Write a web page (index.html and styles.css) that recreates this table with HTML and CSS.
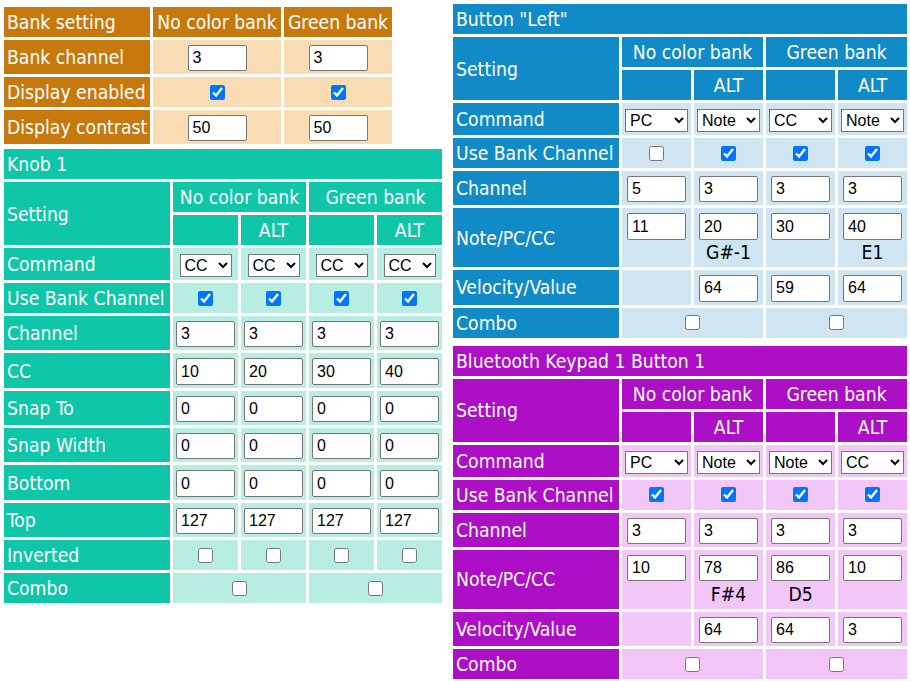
FILE: index.html
```html
<!DOCTYPE html>
<html>
<head>
<meta charset="utf-8">
<link rel="stylesheet" href="styles.css">
</head>
<body>
<div class="page">
  <div class="col col-left">
    <table class="cfg t-bank w-bank">
      <colgroup><col class="c-bank1"><col class="c-bank2"><col class="c-bank3"></colgroup>
      <tr><th class="lbl">Bank setting</th><th class="hd">No color bank</th><th class="hd">Green bank</th></tr>
      <tr><th class="lbl">Bank channel</th><td><input class="num" type="text" value="3"></td><td><input class="num" type="text" value="3"></td></tr>
      <tr><th class="lbl">Display enabled</th><td class="mid"><input type="checkbox" checked></td><td class="mid"><input type="checkbox" checked></td></tr>
      <tr><th class="lbl">Display contrast</th><td><input class="num" type="text" value="50"></td><td><input class="num" type="text" value="50"></td></tr>
    </table>

    <table class="cfg t-knob w-knob">
      <colgroup><col class="c-label"><col class="c-knob"><col class="c-knob"><col class="c-knob"><col class="c-knob"></colgroup>
      <tr><th class="title" colspan="5">Knob 1</th></tr>
      <tr><th class="lbl" rowspan="2">Setting</th><th class="hd" colspan="2">No color bank</th><th class="hd" colspan="2">Green bank</th></tr>
      <tr><th class="hd"></th><th class="hd">ALT</th><th class="hd"></th><th class="hd">ALT</th></tr>
      <tr><th class="lbl">Command</th>
        <td><select class="sel sel-s"><option>CC</option></select></td>
        <td><select class="sel sel-s"><option>CC</option></select></td>
        <td><select class="sel sel-s"><option>CC</option></select></td>
        <td><select class="sel sel-s"><option>CC</option></select></td></tr>
      <tr><th class="lbl">Use Bank Channel</th>
        <td class="mid"><input type="checkbox" checked></td><td class="mid"><input type="checkbox" checked></td><td class="mid"><input type="checkbox" checked></td><td class="mid"><input type="checkbox" checked></td></tr>
      <tr><th class="lbl">Channel</th>
        <td><input class="num" type="text" value="3"></td><td><input class="num" type="text" value="3"></td><td><input class="num" type="text" value="3"></td><td><input class="num" type="text" value="3"></td></tr>
      <tr><th class="lbl">CC</th>
        <td><input class="num" type="text" value="10"></td><td><input class="num" type="text" value="20"></td><td><input class="num" type="text" value="30"></td><td><input class="num" type="text" value="40"></td></tr>
      <tr><th class="lbl">Snap To</th>
        <td><input class="num" type="text" value="0"></td><td><input class="num" type="text" value="0"></td><td><input class="num" type="text" value="0"></td><td><input class="num" type="text" value="0"></td></tr>
      <tr><th class="lbl">Snap Width</th>
        <td><input class="num" type="text" value="0"></td><td><input class="num" type="text" value="0"></td><td><input class="num" type="text" value="0"></td><td><input class="num" type="text" value="0"></td></tr>
      <tr><th class="lbl">Bottom</th>
        <td><input class="num" type="text" value="0"></td><td><input class="num" type="text" value="0"></td><td><input class="num" type="text" value="0"></td><td><input class="num" type="text" value="0"></td></tr>
      <tr><th class="lbl">Top</th>
        <td><input class="num" type="text" value="127"></td><td><input class="num" type="text" value="127"></td><td><input class="num" type="text" value="127"></td><td><input class="num" type="text" value="127"></td></tr>
      <tr><th class="lbl">Inverted</th>
        <td class="mid"><input type="checkbox"></td><td class="mid"><input type="checkbox"></td><td class="mid"><input type="checkbox"></td><td class="mid"><input type="checkbox"></td></tr>
      <tr><th class="lbl">Combo</th>
        <td class="mid" colspan="2"><input type="checkbox"></td><td class="mid" colspan="2"><input type="checkbox"></td></tr>
    </table>
  </div>

  <div class="col col-right">
    <table class="cfg t-btn w-btn">
      <colgroup><col class="c-label"><col class="c-btn"><col class="c-btn"><col class="c-btn"><col class="c-btn"></colgroup>
      <tr><th class="title" colspan="5">Button "Left"</th></tr>
      <tr><th class="lbl" rowspan="2">Setting</th><th class="hd" colspan="2">No color bank</th><th class="hd" colspan="2">Green bank</th></tr>
      <tr><th class="hd"></th><th class="hd">ALT</th><th class="hd"></th><th class="hd">ALT</th></tr>
      <tr><th class="lbl">Command</th>
        <td><select class="sel sel-l"><option selected>PC</option><option>Note</option><option>CC</option></select></td>
        <td><select class="sel sel-l"><option>PC</option><option selected>Note</option><option>CC</option></select></td>
        <td><select class="sel sel-l"><option>PC</option><option>Note</option><option selected>CC</option></select></td>
        <td><select class="sel sel-l"><option>PC</option><option selected>Note</option><option>CC</option></select></td></tr>
      <tr><th class="lbl">Use Bank Channel</th>
        <td class="mid"><input type="checkbox"></td><td class="mid"><input type="checkbox" checked></td><td class="mid"><input type="checkbox" checked></td><td class="mid"><input type="checkbox" checked></td></tr>
      <tr><th class="lbl">Channel</th>
        <td><input class="num" type="text" value="5"></td><td><input class="num" type="text" value="3"></td><td><input class="num" type="text" value="3"></td><td><input class="num" type="text" value="3"></td></tr>
      <tr><th class="lbl">Note/PC/CC</th>
        <td><input class="num" type="text" value="11"></td>
        <td><input class="num" type="text" value="20"><div class="note">G#-1</div></td>
        <td><input class="num" type="text" value="30"></td>
        <td><input class="num" type="text" value="40"><div class="note">E1</div></td></tr>
      <tr><th class="lbl">Velocity/Value</th>
        <td></td><td><input class="num" type="text" value="64"></td><td><input class="num" type="text" value="59"></td><td><input class="num" type="text" value="64"></td></tr>
      <tr><th class="lbl">Combo</th>
        <td class="mid" colspan="2"><input type="checkbox"></td><td class="mid" colspan="2"><input type="checkbox"></td></tr>
    </table>

    <table class="cfg t-bt w-btn">
      <colgroup><col class="c-label"><col class="c-btn"><col class="c-btn"><col class="c-btn"><col class="c-btn"></colgroup>
      <tr><th class="title" colspan="5">Bluetooth Keypad 1 Button 1</th></tr>
      <tr><th class="lbl" rowspan="2">Setting</th><th class="hd" colspan="2">No color bank</th><th class="hd" colspan="2">Green bank</th></tr>
      <tr><th class="hd"></th><th class="hd">ALT</th><th class="hd"></th><th class="hd">ALT</th></tr>
      <tr><th class="lbl">Command</th>
        <td><select class="sel sel-l"><option selected>PC</option><option>Note</option><option>CC</option></select></td>
        <td><select class="sel sel-l"><option>PC</option><option selected>Note</option><option>CC</option></select></td>
        <td><select class="sel sel-l"><option>PC</option><option selected>Note</option><option>CC</option></select></td>
        <td><select class="sel sel-l"><option>PC</option><option>Note</option><option selected>CC</option></select></td></tr>
      <tr><th class="lbl">Use Bank Channel</th>
        <td class="mid"><input type="checkbox" checked></td><td class="mid"><input type="checkbox" checked></td><td class="mid"><input type="checkbox" checked></td><td class="mid"><input type="checkbox" checked></td></tr>
      <tr><th class="lbl">Channel</th>
        <td><input class="num" type="text" value="3"></td><td><input class="num" type="text" value="3"></td><td><input class="num" type="text" value="3"></td><td><input class="num" type="text" value="3"></td></tr>
      <tr><th class="lbl">Note/PC/CC</th>
        <td><input class="num" type="text" value="10"></td>
        <td><input class="num" type="text" value="78"><div class="note">F#4</div></td>
        <td><input class="num" type="text" value="86"><div class="note">D5</div></td>
        <td><input class="num" type="text" value="10"></td></tr>
      <tr><th class="lbl">Velocity/Value</th>
        <td></td><td><input class="num" type="text" value="64"></td><td><input class="num" type="text" value="64"></td><td><input class="num" type="text" value="3"></td></tr>
      <tr><th class="lbl">Combo</th>
        <td class="mid" colspan="2"><input type="checkbox"></td><td class="mid" colspan="2"><input type="checkbox"></td></tr>
    </table>
  </div>
</div>
</body>
</html>
```

FILE: styles.css
```css
html, body {
  margin: 0;
  padding: 0;
  background: #ffffff;
}

body {
  font-family: "DejaVu Sans Condensed", "DejaVu Sans", sans-serif;
  font-size: 19.2px;
}

.page {
  display: flex;
  align-items: flex-start;
  gap: 5px;
  padding: 1px 0 0 1px;
}

.col {
  display: flex;
  flex-direction: column;
  gap: 2px;
}

.col-left {
  padding-top: 3px;
  gap: 0;
}

.col-left .w-knob {
  margin-top: -1px;
}

table.cfg {
  border-collapse: separate;
  border-spacing: 3px;
  table-layout: fixed;
}

.w-bank { width: 394px; }
.w-knob { width: 444px; }
.w-btn { width: 459px; }

col.c-bank1 { width: 146px; }
col.c-bank2 { width: 128px; }
col.c-bank3 { width: 108px; }
col.c-label { width: 166px; }
col.c-knob { width: 65px; }
col.c-btn { width: 69px; }

.cfg th, .cfg td {
  box-sizing: border-box;
  padding: 4px 3px;
  line-height: 22px;
  font-weight: normal;
  white-space: nowrap;
  overflow: hidden;
}

.cfg th {
  color: #ffffff;
  background: var(--dark);
  padding-top: 5px;
  padding-bottom: 3px;
}

.cfg th.lbl, .cfg th.title {
  text-align: left;
}

.cfg th.hd {
  text-align: center;
}

.cfg td {
  background: var(--light);
  text-align: center;
  vertical-align: top;
  color: #000000;
  padding-bottom: 3px;
}

.cfg td.mid {
  vertical-align: middle;
  padding-bottom: 4px;
}

.t-bank { --dark: #c7790d; --light: #f9dcb4; }
.t-knob { --dark: #0fc6a9; --light: #b8ede3; }
.t-btn { --dark: #118bc7; --light: #cfe6f2; }
.t-bt { --dark: #ad0fc6; --light: #f2c6f7; }

input.num {
  display: block;
  box-sizing: border-box;
  width: 59px;
  height: 26.35px;
  margin: 1px auto 0;
  padding: 1px 4px;
  border: 1px solid #767676;
  border-radius: 2px;
  background: #ffffff;
  font-family: "Liberation Sans", Arial, sans-serif;
  font-size: 16px;
  color: #000000;
}

.t-bank input.num {
  height: 26px;
}

input[type="checkbox"] {
  width: 15px;
  height: 15px;
  margin: 0 auto;
  display: block;
  accent-color: #0075ff;
}

select.sel {
  display: block;
  box-sizing: border-box;
  height: 23px;
  margin: 2px auto 0;
  font-family: "Liberation Sans", Arial, sans-serif;
  font-size: 16px;
  color: #000000;
  background: #ffffff;
}

.sel-s { width: 52px; }
.sel-l { width: 63px; }

.note {
  line-height: 22px;
  margin-top: 2.5px;
  color: #000000;
}
```
